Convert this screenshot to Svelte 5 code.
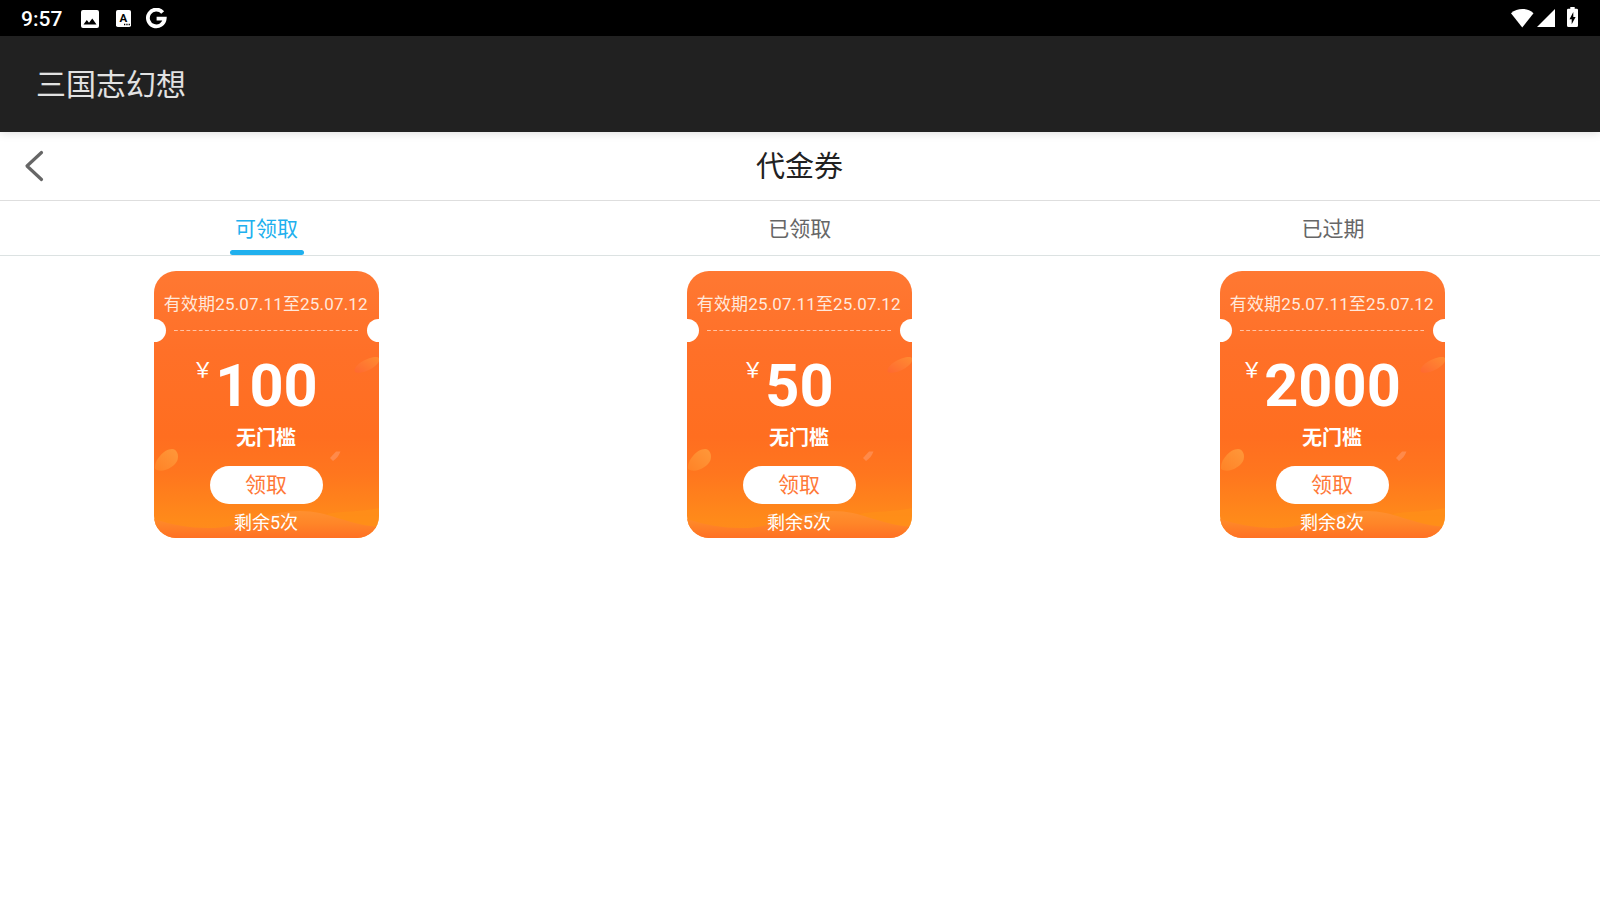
<script lang="ts">
    // 代金券数据
    const coupons = [
        { start: '25.07.11', end: '25.07.12', amount: 100, limit: '无门槛', left: 5 },
        { start: '25.07.11', end: '25.07.12', amount: 50, limit: '无门槛', left: 5 },
        { start: '25.07.11', end: '25.07.12', amount: 2000, limit: '无门槛', left: 8 },
    ];
    const tabs = ['可领取', '已领取', '已过期'];

    let active = $state(0);
</script>

<div class="screen">
    <div class="status">
        <span class="time">9:57</span>
        <svg class="photo" width="18" height="18" viewBox="0 0 18 18">
            <path fill="#fff" fill-rule="evenodd" d="M2 0h14a2 2 0 0 1 2 2v14a2 2 0 0 1-2 2H2a2 2 0 0 1-2-2V2a2 2 0 0 1 2-2zM2.500 14.500h13l-4.200-6-3.300 4.200-2.200-2.600z" />
        </svg>
        <svg class="letter" width="15" height="17" viewBox="0 0 15 17">
            <rect width="15" height="17" rx="1.800" fill="#fff" />
            <text x="7.400" y="12" text-anchor="middle" font-size="11.500" font-weight="700" fill="#000">A</text>
            <path d="M8 14.500h1.300M10.300 14.500h1.300M12.600 14.500h1.300" stroke="#000" stroke-width="1.300" />
        </svg>
        <svg class="google" width="21" height="21" viewBox="0 0 21 21">
            <path d="M16.700 4.500A8.400 8.400 0 1 0 18.700 10.600H10.600" fill="none" stroke="#fff" stroke-width="3.800" />
        </svg>
        <div class="system">
            <svg width="23" height="19" viewBox="0 0 23 19">
                <path fill="#fff" d="M0 4.200C6.500-1.400 16.500-1.400 22.500 4.200L11.250 18.500z" />
            </svg>
            <svg class="signal" width="18" height="18" viewBox="0 0 18 18">
                <path fill="#fff" d="M18 0v18H0z" />
            </svg>
            <svg class="battery" width="11" height="20" viewBox="0 0 11 20">
                <path fill="#fff" d="M3.300 0h4.400v1.700H9.700a1.300 1.300 0 0 1 1.300 1.300v15.500A1.500 1.500 0 0 1 9.500 20h-8A1.500 1.500 0 0 1 0 18.500V3a1.300 1.300 0 0 1 1.300-1.300h2z" />
                <path fill="#000" d="M6.300 5v5h2.300L4.700 17.300v-5H2.500z" />
            </svg>
        </div>
    </div>

    <div class="appbar">三国志幻想</div>

    <header class="header">
        <button class="back" aria-label="返回">
            <svg width="20" height="32" viewBox="0 0 20 32">
                <path d="M17.500 2.500L3 16L17.500 29.500" fill="none" stroke="#666" stroke-width="3.200" stroke-linecap="round" stroke-linejoin="round" />
            </svg>
        </button>
        <h1>代金券</h1>
    </header>

    <nav class="tabs">
        {#each tabs as tab, i}
            <button class="tab" class:active={active === i} onclick={() => (active = i)}>
                <span>{tab}</span>
            </button>
        {/each}
    </nav>

    <main class="list">
        {#each coupons as coupon}
            <article class="coupon">
                <svg class="bg" width="225" height="267" viewBox="0 0 225 267">
                    <defs>
                        <linearGradient id="base" x1="0" y1="0" x2="0" y2="1">
                            <stop offset="0" stop-color="#ff7832" />
                            <stop offset="0.3" stop-color="#ff7028" />
                            <stop offset="0.62" stop-color="#ff6e20" />
                            <stop offset="0.76" stop-color="#ff761e" />
                            <stop offset="0.93" stop-color="#ff8a1a" />
                            <stop offset="1" stop-color="#ff8c1c" />
                        </linearGradient>
                        <linearGradient id="wave" x1="0" y1="240" x2="0" y2="267" gradientUnits="userSpaceOnUse">
                            <stop offset="0" stop-color="#ff9030" />
                            <stop offset="0.45" stop-color="#ff8628" />
                            <stop offset="1" stop-color="#ff7024" />
                        </linearGradient>
                        <linearGradient id="leaf" x1="0" y1="1" x2="1" y2="0">
                            <stop offset="0" stop-color="#ff8226" />
                            <stop offset="1" stop-color="#ff983a" />
                        </linearGradient>
                        <linearGradient id="petal" x1="0" y1="1" x2="1" y2="0">
                            <stop offset="0" stop-color="#ff6830" />
                            <stop offset="1" stop-color="#ff8c32" />
                        </linearGradient>
                    </defs>
                    <rect width="225" height="267" fill="url(#base)" />
                    <path fill="#ff9018" opacity="0.7" d="M172 243C190 240 205 241 225 237V258C205 256 190 252 172 243z" />
                    <path fill="url(#wave)" d="M0 248C18 254 36 257 54 257C90 257 110 240 146 240C175 240 190 253 225 256V267H0z" />
                    <path fill="url(#leaf)" d="M1 198C0 189 10 178 18 178C23 178 25 184 23.500 189C21 196 8 203 1 198z" />
                    <path fill="url(#petal)" d="M201 101C198 95 213 86 222 86C226 86 226 89 224 92C220 98 206 104 201 101z" />
                    <path fill="#ff8a4a" d="M176 187L182 180.500H186.500C185 185 182 188 179 190z" />
                </svg>
                <p class="date">有效期{coupon.start}至{coupon.end}</p>
                <div class="cut">
                    <svg width="184" height="1" viewBox="0 0 184 1">
                        <path d="M0 .5H184" stroke="#ffc4a6" stroke-width="1" stroke-dasharray="3.800 2.420" />
                    </svg>
                </div>
                <div class="amount">
                    <span class="yen">￥</span>
                    <strong>{coupon.amount}</strong>
                </div>
                <p class="limit">{coupon.limit}</p>
                <button class="get">领取</button>
                <p class="left">剩余{coupon.left}次</p>
            </article>
        {/each}
    </main>
</div>

<style>
    :global(body) {
        background: #fff;
    }
    .screen {
        height: 900px;
        overflow: hidden;
        font-family: Roboto, "Noto Sans CJK SC", sans-serif;
        color: #222;
    }
    button {
        border: 0;
        padding: 0;
        background: none;
        font-family: inherit;
    }
    p, h1 {
        margin: 0;
        font-weight: 400;
    }
    svg {
        display: block;
        flex: none;
    }
    .status {
        display: flex;
        align-items: center;
        box-sizing: border-box;
        height: 36px;
        padding: 1px 22px 0 21px;
        background: #000;
        color: #fff;
    }
    .time {
        width: 60px;
        font-size: 21px;
        font-weight: 500;
        line-height: 36px;
    }
    .letter {
        margin-left: 17px;
    }
    .google {
        margin-left: 15px;
    }
    .system {
        display: flex;
        align-items: center;
        height: 34px;
        margin-left: auto;
        padding-bottom: 1px;
        box-sizing: border-box;
    }
    .signal {
        margin-left: 3px;
    }
    .battery {
        margin-left: 12px;
        margin-top: -2px;
    }
    .appbar {
        position: relative;
        height: 96px;
        padding-left: 36px;
        background: #212121;
        box-shadow: 0 1px 9px rgba(0, 0, 0, 0.14);
        color: #e2e2e2;
        font-size: 30px;
        line-height: 97px;
    }
    .header {
        display: grid;
        grid-template-columns: 100px 1fr 101px;
        align-items: center;
        height: 68px;
        border-bottom: 1px solid #dedede;
    }
    .back {
        padding-left: 24px;
    }
    h1 {
        height: 68px;
        font-size: 29px;
        line-height: 70px;
        text-align: center;
    }
    .tabs {
        display: grid;
        grid-template-columns: repeat(3, 1fr);
        height: 54px;
        border-bottom: 1px solid #dce2e2;
    }
    .tab {
        display: flex;
        flex-direction: column;
        align-items: center;
        justify-content: space-between;
        color: #666;
        font-size: 21px;
        line-height: 56px;
    }
    .tab span {
        height: 49px;
        padding-right: 0.5px;
    }
    .tab.active {
        color: #20b0ee;
    }
    .tab.active::after {
        content: '';
        width: 74px;
        height: 5px;
        border-radius: 3px;
        background: #20b0ee;
    }
    .list {
        display: grid;
        grid-template-columns: repeat(3, 1fr);
        justify-items: center;
        padding: 15px 1px 0 0;
    }
    .coupon {
        position: relative;
        z-index: 0;
        display: grid;
        grid-template-columns: 100%;
        grid-template-rows: 48px 23px 79px 45px 38px 34px;
        justify-items: center;
        width: 225px;
        height: 267px;
        border-radius: 22px;
        overflow: hidden;
        color: #fff;
    }
    .bg {
        position: absolute;
        inset: 0;
        z-index: -1;
    }
    .date {
        padding-top: 20px;
        padding-right: 1.5px;
        font-size: 17px;
        line-height: 26px;
        letter-spacing: 0.17px;
        white-space: nowrap;
        color: #ffe8dc;
    }
    .cut {
        display: flex;
        align-items: center;
        justify-content: space-between;
        justify-self: stretch;
        margin: 0 -11px 0 -11.5px;
    }
    .cut::before,
    .cut::after {
        content: '';
        width: 23px;
        height: 23px;
        border-radius: 50%;
        background: #fff;
    }
    .amount {
        display: grid;
        grid-template-columns: 1fr auto 1fr;
        justify-self: stretch;
        padding-top: 9px;
    }
    .yen {
        margin-right: 2px;
        font-size: 21px;
        font-family: "Noto Sans CJK SC", sans-serif;
        line-height: 34px;
        text-align: right;
    }
    .amount strong {
        font-size: 59.5px;
        line-height: 70px;
        font-weight: 700;
    }
    .limit {
        padding-right: 1px;
        font-size: 20px;
        font-weight: 700;
        line-height: 34px;
    }
    .get {
        width: 113px;
        padding: 1px 1px 0 0;
        border-radius: 19px;
        background: #fff;
        color: #ff7838;
        font-size: 21px;
        line-height: 37px;
    }
    .left {
        padding-right: 1px;
        font-size: 18px;
        line-height: 38px;
    }
</style>
